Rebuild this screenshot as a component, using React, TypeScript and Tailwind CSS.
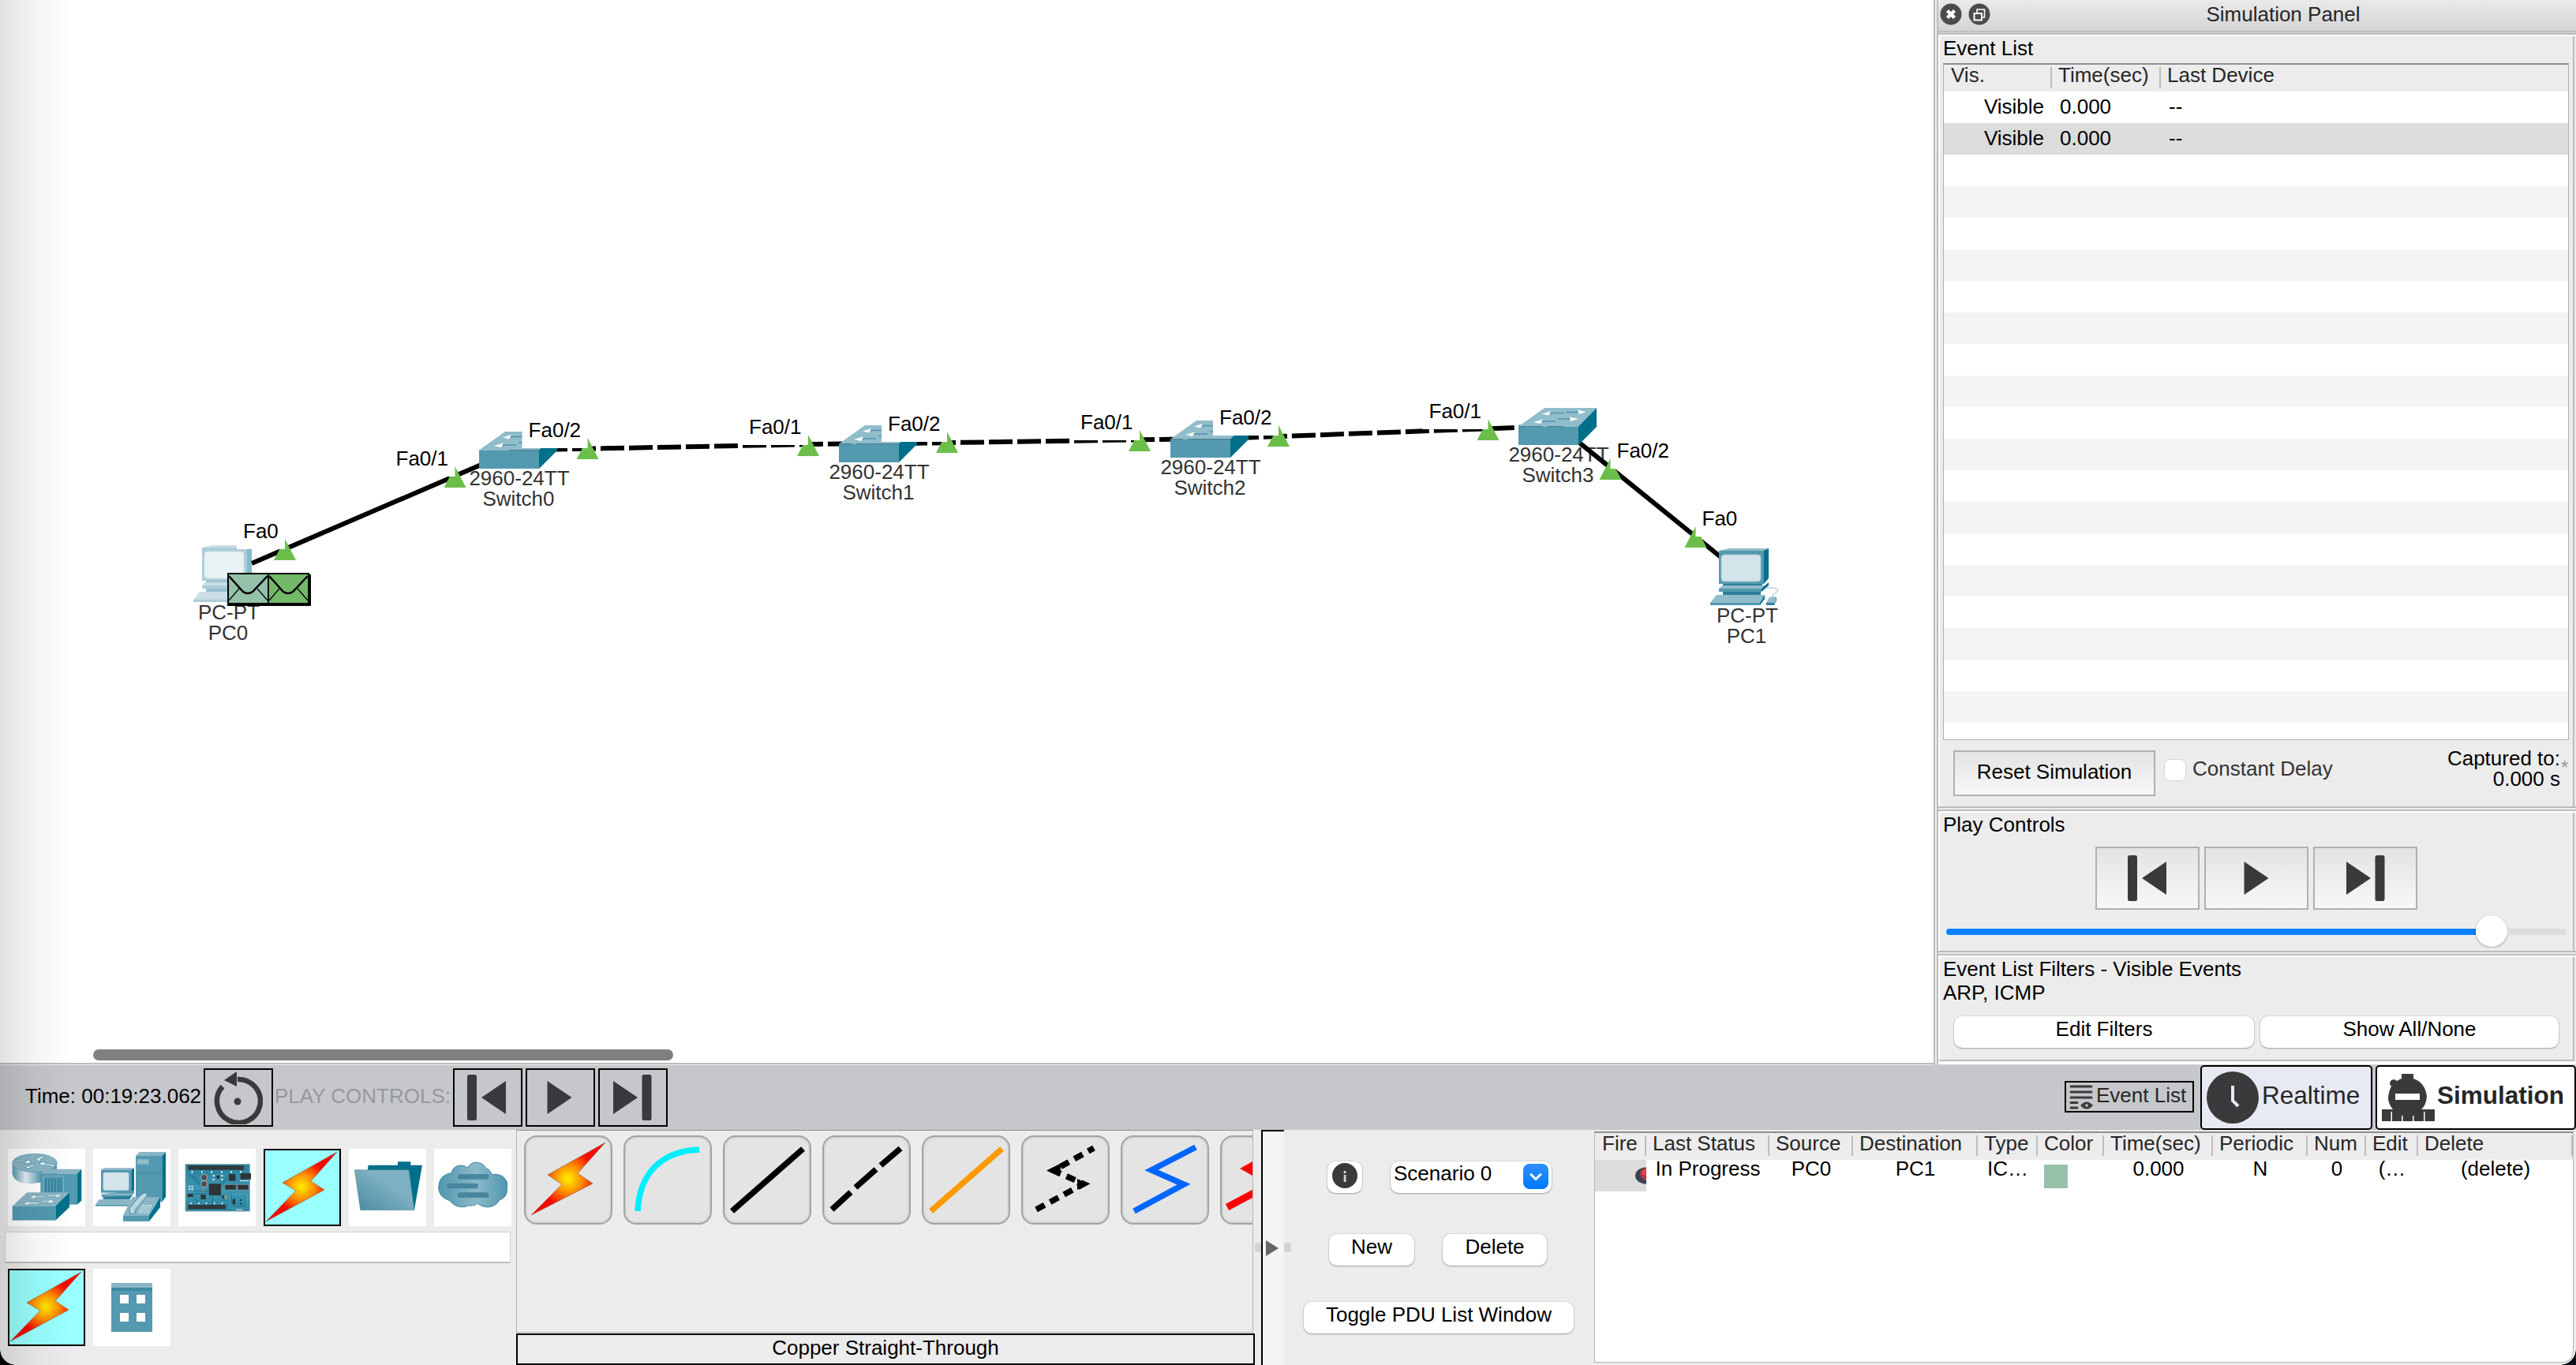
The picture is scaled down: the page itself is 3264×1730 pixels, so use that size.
import React from 'react';

const NAME_FILL = '#333333';

function Switch({ x, y }: { x: number; y: number }) {
  return (
    <g transform={`translate(${x} ${y})`}>
      <polygon points="33,0 99,0 76,23.5 0,23.5" fill="#91bccb" />
      <polygon points="99,0 99,24 76,47 76,23.5" fill="#00708a" />
      <rect x="0" y="23.5" width="76" height="23.5" fill="#5399b0" />
      <g stroke="#4f93aa" strokeWidth="1.6">
        <path d="M40 6.5H57M60 5.5H76M28 17H47M50 14H66" />
      </g>
      <g fill="#ffffff">
        <polygon points="30,7.5 41,4 38,9.5" />
        <polygon points="86,5 75,2.5 77,8" />
        <polygon points="19,18 31,14.5 28,20" />
        <polygon points="76,14 65,11.5 66,17" />
      </g>
    </g>
  );
}

function Pc({ x, y, opacity = 1 }: { x: number; y: number; opacity?: number }) {
  return (
    <g transform={`translate(${x} ${y})`} opacity={opacity}>
      <path d="M70 50C86 49 90 53 82 57C79 58 79 59 79 62" fill="none" stroke="#a9cad6" strokeWidth="1.2" />
      <polygon points="11,3 24,0 74,0 69,3" fill="#91bccb" />
      <polygon points="68,3 74,0 74,38 68,45" fill="#00708a" />
      <rect x="11" y="3" width="57" height="42" fill="#5399b0" />
      <rect x="14" y="8" width="50" height="34" rx="4" fill="#d3e4ea" stroke="#9cc3d0" strokeWidth="1" />
      <rect x="16" y="45" width="50" height="3" fill="#2b8099" />
      <polygon points="15,47 70,47 65,51 11,51" fill="#91bccb" />
      <rect x="11" y="51" width="54" height="4" fill="#5399b0" />
      <polygon points="65,51 74,43 74,47 65,55" fill="#00708a" />
      <rect x="16" y="55" width="48" height="4" fill="#2b8099" />
      <polygon points="8,59 69,59 63,69 0,69" fill="#91bccb" />
      <rect x="0" y="69" width="63" height="3" fill="#5399b0" />
      <polygon points="69,59 69,64 63,72 63,69" fill="#00708a" />
      <polygon points="75,62 84,61 82,69 71,69" fill="#91bccb" />
      <polygon points="71,69 82,69 84,61 84,66 81,72 71,72" fill="#2b8099" />
    </g>
  );
}

function Name({ x, y, lines }: { x: number; y: number; lines: [string, string] }) {
  return (
    <g fill={NAME_FILL} textAnchor="middle">
      <text x={x} y={y}>{lines[0]}</text>
      <text x={x - 1} y={y + 26}>{lines[1]}</text>
    </g>
  );
}

function Port({ x, y, label, side, width = 83 }: { x: number; y: number; label: string; side: 'l' | 'r'; width?: number }) {
  const rx = side === 'l' ? x - width : x;
  return (
    <g>
      <polygon points={`${x},${y - 27} ${x + 14},${y} ${x - 14},${y}`} fill="#6cbe4a" />
      <rect x={rx} y={y - 54} width={width} height="40" fill="#ffffff" />
      <text x={rx + 8} y={y - 28} fill="#000000">{label}</text>
    </g>
  );
}

function Envelope({ x, y, color }: { x: number; y: number; color: string }) {
  return (
    <g transform={`translate(${x} ${y})`} fill="none" stroke="#000000">
      <rect x="1" y="1" width="51" height="38" fill={color} strokeWidth="2" />
      <path d="M2 4L20 24Q26 28 32 24L51 4" strokeWidth="2.5" />
      <path d="M2 35L15 20M51 35L38 20" strokeWidth="1.2" />
    </g>
  );
}

function Workspace() {
  return (
    <svg className="block" width="2450" height="1347" viewBox="0 0 2450 1347" fontFamily='"Liberation Sans", Arial, sans-serif' fontSize="26">
      <Name x={658} y={615} lines={['2960-24TT', 'Switch0']} />
      <Name x={1114} y={607} lines={['2960-24TT', 'Switch1']} />
      <Name x={1534} y={601} lines={['2960-24TT', 'Switch2']} />
      <Name x={1975} y={585} lines={['2960-24TT', 'Switch3']} />
      <Name x={290} y={785} lines={['PC-PT', 'PC0']} />
      <Name x={2214} y={789} lines={['PC-PT', 'PC1']} />
      <g stroke="#000000" strokeWidth="6" fill="none">
        <path d="M319 714L656 569M1974 539L2210 730" />
        <path strokeDasharray="30 6" d="M653 570.5L1112 561.5" />
        <path strokeDasharray="30 6" d="M1109 562.5L1532 556" />
        <path strokeDasharray="30 6" d="M1529 556.5L1974 540" />
      </g>
      <Switch x={607} y={547} />
      <Switch x={1063} y={539} />
      <Switch x={1483} y={533} />
      <Switch x={1924} y={517} />
      <Pc x={2167} y={695} />
      <Pc x={245} y={691} opacity={0.48} />
      <Port x={361} y={710} label="Fa0" side="l" width={61} />
      <Port x={576.5} y={618} label="Fa0/1" side="l" />
      <Port x={744.6} y={582} label="Fa0/2" side="l" />
      <Port x={1024} y={578} label="Fa0/1" side="l" />
      <Port x={1200} y={574} label="Fa0/2" side="l" />
      <Port x={1444} y={572} label="Fa0/1" side="l" />
      <Port x={1620} y={566} label="Fa0/2" side="l" />
      <Port x={1885.5} y={558} label="Fa0/1" side="l" />
      <Port x={2040.5} y={608} label="Fa0/2" side="r" />
      <Port x={2148.5} y={694} label="Fa0" side="r" width={61} />
      <rect x="288" y="728" width="106" height="40" fill="#000000" />
      <Envelope x={288} y={726} color="#94c1a9" />
      <Envelope x={339} y={726} color="#74b86a" />
    </svg>
  );
}

type PlayKind = 'back' | 'play' | 'forward';

function PlayIcon({ kind, className }: { kind: PlayKind; className?: string }) {
  return (
    <svg className={className} width="56" height="60" viewBox="0 0 56 60" fill="#3a3a3c">
      {kind === 'back' && (
        <>
          <rect x="3" y="1" width="12" height="58" rx="2.5" />
          <polygon points="21,30 52,9 52,51" />
        </>
      )}
      {kind === 'play' && <polygon points="12.5,9 43.500,30 12.500,51" />}
      {kind === 'forward' && (
        <>
          <polygon points="4,9 35,30 4,51" />
          <rect x="40.5" y="1" width="12" height="58" rx="2.5" />
        </>
      )}
    </svg>
  );
}

function SectionGap() {
  return (
    <div className="h-[8px] border-t-2 border-[#bcbcbc] pt-[2px]">
      <div className="h-[4px] border-t-2 border-[#bcbcbc] bg-white" />
    </div>
  );
}

function MacButton({ children, className = '' }: { children: React.ReactNode; className?: string }) {
  return (
    <button className={`flex h-[40px] justify-center rounded-[10px] bg-white leading-[33px] shadow-[0_0_1px_1px_rgba(0,0,0,0.07),0_1px_2px_rgba(0,0,0,0.28)] ${className}`}>
      {children}
    </button>
  );
}

const events = Array.from({ length: 21 }, (_, i) => (i < 2 ? { vis: 'Visible', time: '0.000', last: '--' } : null));

function SimulationPanel() {
  return (
    <aside className="flex h-[1350px] w-[814px] shrink-0 border-l-2 border-[#bcbcbc] bg-[#ececec] pl-[2px]">
      <div className="flex flex-1 flex-col border-l-2 border-[#bcbcbc]">
        <div className="flex h-[39px] shrink-0 items-start bg-gradient-to-b from-[#eaeaea] to-[#d4d4d4] text-[#262626]">
          <div className="flex w-[66px] shrink-0 gap-[8px] pt-[4px] pl-[2px]">
            <svg width="28" height="28" viewBox="0 0 28 28">
              <circle cx="14" cy="14" r="13.5" fill="#4b4b4b" />
              <path d="M9.5 9.5L18.5 18.5M18.5 9.5L9.5 18.5" stroke="#fff" strokeWidth="4.5" />
            </svg>
            <svg width="28" height="28" viewBox="0 0 28 28">
              <circle cx="14" cy="14" r="13.5" fill="#4b4b4b" />
              <path d="M11 12V8H20.5V18H17" fill="none" stroke="#fff" strokeWidth="1.6" />
              <rect x="7.5" y="13" width="9.5" height="8.5" fill="none" stroke="#fff" strokeWidth="2" />
            </svg>
          </div>
          <div className="flex-1 text-center leading-[36px]">Simulation Panel</div>
        </div>
        <div className="flex h-[7px] shrink-0 flex-col border-t-2 border-[#bdbdbd] bg-[#d6d6d6] pt-[1px]">
          <div className="flex-1 border-t-2 border-[#bdbdbd] bg-white" />
        </div>

        <div className="mr-[2px] h-[976px] shrink-0 border-r-2 border-r-[#bcbcbc] border-l-2 border-l-white px-[4px]">
          <div className="h-[34px] leading-[30px]">Event List</div>
          <div className="mr-[1px] h-[858px] overflow-hidden border border-t-2 border-[#b0b0b0] border-t-[#8f8f8f] bg-white">
            <div className="flex h-[34px] bg-[#ececec] pt-[3px] leading-[20px] text-[#262626]">
              <div className="h-[27px] w-[137px] border-r-2 border-[#bdbdbd] pl-[9px]">Vis.</div>
              <div className="h-[27px] w-[138px] border-r-2 border-[#bdbdbd] pl-[8px]">Time(sec)</div>
              <div className="pl-[8px]">Last Device</div>
            </div>
            {events.map((e, i) => (
              <div key={i} className={`flex h-[40px] leading-[38px] ${i === 1 ? 'bg-[#dcdcdc]' : i % 2 ? 'bg-[#f3f5f4]' : 'bg-white'}`}>
                {e && (
                  <>
                    <div className="w-[127px] text-right">{e.vis}</div>
                    <div className="w-[138px] pl-[20px]">{e.time}</div>
                    <div className="pl-[20px]">{e.last}</div>
                  </>
                )}
              </div>
            ))}
          </div>
          <div className="flex h-[84px] items-start pl-[13px]">
            <button className="mt-[13px] h-[58px] w-[256px] border-2 border-[#b0b0b0] bg-gradient-to-b from-[#e3e3e3] to-[#f8f8f8] pb-[4px]">Reset Simulation</button>
            <div className="mt-[24px] ml-[11px] h-[28px] w-[28px] rounded-[7px] border border-[#d4d4d4] bg-white" />
            <div className="mt-[23px] ml-[8px] leading-[26px] text-[#333]">Constant Delay</div>
            <div className="mt-[10px] ml-auto text-right leading-[26px]">
              <div>Captured to:</div>
              <div>0.000 s</div>
            </div>
            <div className="mt-[22px] ml-px w-[11px] text-[24px] leading-[26px] text-[#9a9a9a]">*</div>
          </div>
        </div>
        <SectionGap />

        <div className="mr-[2px] h-[175px] shrink-0 border-r-2 border-r-[#bcbcbc] border-l-2 border-l-white px-[4px]">
          <div className="h-[43px] leading-[30px]">Play Controls</div>
          <div className="flex justify-center gap-[6px]">
            {(['back', 'play', 'forward'] as PlayKind[]).map((k) => (
              <button key={k} className="flex h-[80px] w-[132px] items-center justify-center border-2 border-[#b0b0b0] bg-gradient-to-b from-[#e3e3e3] to-[#f8f8f8]">
                <PlayIcon kind={k} />
              </button>
            ))}
          </div>
          <div className="mt-[8px] ml-[4px] flex h-[40px] w-[786px] items-center overflow-hidden">
            <div className="h-[8px] w-[671px] rounded-l-full bg-[#0a82ff]" />
            <div className="-mt-[2px] h-[40px] w-[40px] shrink-0 rounded-full bg-white shadow-[0_1px_3px_rgba(0,0,0,0.35)]" />
            <div className="h-[8px] flex-1 rounded-r-full bg-[#dcdcdc]" />
          </div>
        </div>
        <SectionGap />

        <div className="mr-[2px] flex h-[132px] shrink-0 flex-col border-r-2 border-b-2 border-r-[#bcbcbc] border-b-[#bcbcbc] border-l-2 border-l-white px-[4px]">
          <div className="leading-[31px]">Event List Filters - Visible Events</div>
          <div className="leading-[29px]">ARP, ICMP</div>
          <div className="mt-[15px] flex gap-[8px] pl-[14px]">
            <MacButton className="w-[380px]">Edit Filters</MacButton>
            <MacButton className="w-[378px]">Show All/None</MacButton>
          </div>
        </div>
        <div className="flex-1 border-b border-[#d0d0d0] bg-white" />
      </div>
    </aside>
  );
}

function Toolbar() {
  return (
    <div className="flex h-[82px] shrink-0 items-center bg-[#c6c7cb]">
      <div className="w-[258px] pb-[4px] pl-[32px] whitespace-nowrap">Time: 00:19:23.062</div>
      <button className="flex h-[74px] w-[88px] items-center justify-center border-2 border-black pr-[2px]">
        <svg width="64" height="68" viewBox="0 0 64 68">
          <path d="M13 20A27.5 27.5 0 1 0 32 11" fill="none" stroke="#3a3a3c" strokeWidth="6.5" />
          <polygon points="31,1 31,20 15,12" fill="#3a3a3c" />
          <circle cx="32" cy="39" r="4.5" fill="#3a3a3c" />
        </svg>
      </button>
      <div className="w-[228px] pb-[4px] pl-[2px] whitespace-nowrap text-[#98989b]">PLAY CONTROLS:</div>
      <div className="flex gap-[4px]">
        {(['back', 'play', 'forward'] as PlayKind[]).map((k) => (
          <button key={k} className="flex h-[74px] w-[88px] items-center justify-center border-2 border-black">
            <PlayIcon kind={k} className="-ml-[3px]" />
          </button>
        ))}
      </div>
      <button className="mt-[-2px] ml-auto flex h-[40px] w-[164px] items-center border-2 border-black pl-[3px] text-[#262626]">
        <svg width="34" height="34" viewBox="0 0 34 34" fill="none" stroke="#3a3a3c" strokeWidth="3" strokeLinecap="round">
          <path d="M3 4H29M3 11H29M3 18H29M3 24.5H11M3 31H11" />
          <path d="M15 28Q23 19 31 28Q23 37 15 28Z" fill="#3a3a3c" stroke="none" />
          <circle cx="23" cy="28" r="1.8" fill="#c6c7cb" stroke="none" />
        </svg>
        <span className="pb-[4px] pl-px whitespace-nowrap">Event List</span>
      </button>
      <button className="ml-[8px] flex h-[82px] w-[218px] items-center rounded-[5px] border-2 border-black bg-[#e7eaf3] pl-[6px] text-[31.5px] text-[#262626]">
        <svg width="66" height="66" viewBox="0 0 66 66">
          <circle cx="33" cy="33" r="33" fill="#3a3a3c" />
          <path d="M33 18V37L40 44" fill="none" stroke="#e7eaf3" strokeWidth="4" />
        </svg>
        <span className="pb-[5px] pl-[4px]">Realtime</span>
      </button>
      <button className="ml-[4px] flex h-[82px] w-[254px] items-center rounded-[5px] border-2 border-black bg-white pl-[5px] text-[31.5px] font-bold text-[#262626]">
        <svg width="68" height="62" viewBox="0 0 68 62" fill="#3a3a3c">
          <path d="M26 1H41V7Q56 12 58 30Q57 41 51 46H68V61H1V46H15Q9 39 9 31Q10 22 13 17L11 14Q11 8 17 8L20 10Q23 8 26 7Z" />
          <rect x="18" y="26" width="31" height="8" fill="#ffffff" />
          <g fill="#ffffff">
            <rect x="12.5" y="49" width="1.5" height="12" />
            <rect x="26" y="54" width="1.5" height="7" />
            <rect x="40" y="54" width="1.5" height="7" />
            <rect x="54" y="49" width="1.5" height="12" />
          </g>
        </svg>
        <span className="pb-[5px] pl-[3px]">Simulation</span>
      </button>
    </div>
  );
}

function Bolt({ className, points }: { className?: string; points: string }) {
  return (
    <svg className={className} viewBox="0 0 98 98">
      <defs>
        <radialGradient id="bolt" gradientUnits="userSpaceOnUse" cx="48" cy="48" r="34">
          <stop offset="0" stopColor="#fff200" />
          <stop offset="0.5" stopColor="#ff8a00" />
          <stop offset="1" stopColor="#f80800" />
        </radialGradient>
      </defs>
      <polygon points={points} fill="url(#bolt)" stroke="#8a5a4a" strokeWidth="0.6" />
    </svg>
  );
}

const BOLT_POINTS = '93,4 24,43 41,53 3,92 77,52 60,41';

function NetworkDevices() {
  return (
    <svg className="h-[98px] w-[98px]" viewBox="0 0 294 294">
      <defs>
        <linearGradient id="cyl" x1="0" x2="1" y1="0" y2="0">
          <stop offset="0" stopColor="#5399b0" />
          <stop offset="0.3" stopColor="#e8f1f4" />
          <stop offset="0.65" stopColor="#5399b0" />
        </linearGradient>
      </defs>
      <path d="M17 58V96Q25 132 85 133Q145 132 186 96V58Z" fill="url(#cyl)" />
      <ellipse cx="102" cy="54" rx="85" ry="35" fill="#8ab5c5" stroke="#5399b0" strokeWidth="2" />
      <g fill="#ffffff" stroke="#2f7f97" strokeWidth="2">
        <path d="M30 40L72 48L76 41L90 52L66 58L68 52L30 45Z" />
        <path d="M106 44L114 35L134 26L138 31L122 40L124 47Z" />
        <path d="M180 62L140 55L142 49L118 54L134 66L136 60L176 68Z" />
        <path d="M98 56L96 68L84 70L86 76L66 72L76 64L80 68Z" />
      </g>
      <polygon points="124,95 140,77 280,77 263,95" fill="#8ab5c5" />
      <rect x="124" y="95" width="139" height="117" fill="#5399b0" />
      <polygon points="263,95 280,77 280,197 263,212" fill="#00708a" />
      <rect x="134" y="104" width="77" height="75" fill="#5399b0" stroke="#8ab5c5" strokeWidth="3" />
      <path d="M144 113V168M156 113V168M168 113V168M180 113V168M192 113V168M202 113V168" stroke="#2b7f97" strokeWidth="4" />
      <polygon points="73,166 234,166 181,218 17,218" fill="#8ab5c5" />
      <polygon points="234,166 234,222 181,272 181,218" fill="#00708a" />
      <rect x="17" y="218" width="164" height="54" fill="#5399b0" />
      <g fill="#ffffff" stroke="#5b9db3" strokeWidth="1.5">
        <path d="M84 184L108 174L104 180H140V184H104L102 190Z" />
        <path d="M206 178L182 172L186 176H150V180H184L178 186Z" />
        <path d="M58 208L84 200L80 204H118V209H80L78 214Z" />
        <path d="M180 200L156 192L158 197H126V201H156L152 208Z" />
      </g>
    </svg>
  );
}

function EndDevices() {
  return (
    <svg className="h-[98px] w-[98px]" viewBox="0 0 294 294">
      <polygon points="162,27 176,12 276,12 262,27" fill="#8ab5c5" />
      <rect x="162" y="27" width="100" height="175" fill="#5399b0" />
      <polygon points="262,27 276,12 276,183 262,202" fill="#00708a" />
      <path d="M162 94H262" stroke="#3d879f" strokeWidth="2" />
      <rect x="167" y="39" width="45" height="21" fill="#8ab5c5" />
      <path d="M172 48H206" stroke="#d3e4ea" strokeWidth="2" />
      <polygon points="30,80 42,73 156,73 146,80" fill="#8ab5c5" />
      <rect x="30" y="80" width="115" height="87" fill="#5399b0" />
      <polygon points="145,80 156,74 156,157 145,167" fill="#00708a" />
      <rect x="38" y="90" width="98" height="68" rx="8" fill="#d3e4ea" />
      <polygon points="34,172 156,160 156,168 140,184 32,184" fill="#5399b0" />
      <polygon points="34,170 148,170 140,177 30,177" fill="#8ab5c5" />
      <polygon points="38,184 150,178 138,193 38,193" fill="#2b7f97" />
      <polygon points="22,193 148,193 134,212 9,212" fill="#8ab5c5" />
      <polygon points="9,212 134,212 150,195 150,202 136,218 9,218" fill="#5399b0" />
      <polygon points="150,183 255,184 213,253 114,253" fill="#8ab5c5" />
      <polygon points="255,184 255,222 213,276 213,253" fill="#00708a" />
      <rect x="114" y="253" width="99" height="23" fill="#5399b0" />
      <path d="M192 168H205V178L162 230L158 246L140 248L138 226L178 178Z" fill="#b9d6e0" stroke="#3d879f" strokeWidth="3" />
      <path d="M188 214H224L208 244H172Z" fill="#d9e9ee" />
      <path d="M184 221H220M180 229H216M176 237H212M197 214L182 244M206 214L191 244M215 214L200 244" stroke="#6ba6ba" strokeWidth="2.5" />
    </svg>
  );
}

function Board() {
  return (
    <svg className="h-[98px] w-[98px]" viewBox="0 0 294 294">
      <defs>
        <linearGradient id="pcb" x1="0" x2="0" y1="0" y2="1">
          <stop offset="0" stopColor="#257f9b" />
          <stop offset="0.55" stopColor="#3e97b3" />
          <stop offset="1" stopColor="#2782a0" />
        </linearGradient>
      </defs>
      <rect x="27" y="59" width="244" height="178" fill="url(#pcb)" stroke="#86a5b0" strokeWidth="3" />
      <g stroke="#14617b" strokeWidth="2.5" fill="none">
        <path d="M44 100L86 142M52 100L90 136M190 105L150 138M185 115L160 145M60 160H115M60 170H110M60 190L80 205M160 180L178 200M200 170V205M105 195V212M130 180V212" />
      </g>
      <g fill="#2d3438">
        <rect x="37" y="64" width="212" height="16" />
        <rect x="37" y="213" width="143" height="16" />
        <rect x="236" y="93" width="40" height="23" />
        <rect x="192" y="96" width="25" height="26" />
        <rect x="116" y="133" width="46" height="44" />
        <rect x="85" y="174" width="19" height="18" />
        <rect x="35" y="171" width="21" height="12" />
        <rect x="177" y="136" width="43" height="20" stroke="#8a9195" strokeWidth="2" />
        <rect x="225" y="136" width="42" height="20" stroke="#8a9195" strokeWidth="2" />
        <rect x="206" y="191" width="10" height="20" />
        <rect x="167" y="177" width="7" height="10" />
      </g>
      <path d="M42 72H246M42 221H178" stroke="#434c54" strokeWidth="4" strokeDasharray="4 6" />
      <circle cx="98" cy="109" r="12" fill="#4c4c4c" stroke="#d9dcdd" strokeWidth="2" />
      <circle cx="98" cy="134" r="12" fill="#4c4c4c" stroke="#d9dcdd" strokeWidth="2" />
      <rect x="196" y="174" width="66" height="52" fill="none" stroke="#7cc0d4" strokeWidth="2" strokeDasharray="6 3" />
      <g fill="#e6eef1">
        <path d="M50 84h5v8h-5zM87 84h5v8h-5zM124 84h5v8h-5zM162 84h5v8h-5zM198 84h5v8h-5zM235 84h5v8h-5zM45 203h5v8h-5zM75 203h5v8h-5zM104 203h5v8h-5zM134 203h5v8h-5zM164 203h5v8h-5z" />
        <path d="M130 100h8v5h-8zM130 114h8v5h-8zM162 100h8v5h-8zM162 114h8v5h-8zM40 140h6v6h-6zM50 140h6v6h-6zM40 150h6v6h-6zM50 150h6v6h-6zM234 120h32v3h-32zM218 230h26v3h-26z" />
      </g>
      <rect x="146" y="102" width="9" height="11" fill="#222" />
      <path d="M178 176h6v16h-6zM92 154h5v8h-5z" fill="#d98a4a" />
      <path d="M234 192h6v6h-6zM234 206h6v6h-6z" fill="#14405a" />
    </svg>
  );
}

function Folder() {
  return (
    <svg className="h-[98px] w-[98px]" viewBox="0 0 294 294">
      <defs>
        <linearGradient id="fold" x1="0" x2="1" y1="1" y2="0">
          <stop offset="0" stopColor="#4a8aa0" />
          <stop offset="0.6" stopColor="#7db0c2" />
          <stop offset="1" stopColor="#7db0c2" />
        </linearGradient>
      </defs>
      <polygon points="74,62 186,62 186,49 235,49 235,62 279,62 249,232 70,90" fill="#00708a" />
      <polygon points="22,80 228,80 249,233 44,233" fill="url(#fold)" stroke="#5b7f8b" strokeWidth="1.5" />
    </svg>
  );
}

function Cloud() {
  return (
    <svg className="h-[98px] w-[98px]" viewBox="0 0 294 294">
      <defs>
        <linearGradient id="cloud" x1="0" x2="1" y1="0" y2="0">
          <stop offset="0" stopColor="#4f97b0" />
          <stop offset="0.55" stopColor="#8cb9c9" />
          <stop offset="1" stopColor="#4f97b0" />
        </linearGradient>
      </defs>
      <path
        d="M66 92Q72 66 98 63Q117 62 127 72Q142 48 166 52Q188 55 197 74Q215 80 219 98Q252 93 268 112Q282 127 277 150Q280 186 248 195Q238 218 205 222Q182 222 163 207Q154 220 146 214Q138 220 130 215Q122 222 110 221Q78 222 60 197Q17 184 17 146Q19 98 66 92Z"
        fill="url(#cloud)"
        stroke="#3f879f"
        strokeWidth="3"
      />
      <g fill="#47869d">
        <rect x="90" y="96" width="118" height="20" rx="8" />
        <rect x="49" y="131" width="118" height="20" rx="8" />
        <rect x="90" y="166" width="118" height="20" rx="8" />
      </g>
    </svg>
  );
}

function Tile({ children, active }: { children: React.ReactNode; active?: boolean }) {
  return (
    <div className={`flex h-[98px] w-[98px] shrink-0 items-center justify-center overflow-hidden ${active ? 'border-2 border-black bg-[#99ffff]' : 'bg-white'}`}>
      {children}
    </div>
  );
}

function DevicePicker() {
  return (
    <div className="w-[654px] shrink-0 pt-[24px]">
      <div className="flex gap-[10px] pl-[10px]">
        <Tile><NetworkDevices /></Tile>
        <Tile><EndDevices /></Tile>
        <Tile><Board /></Tile>
        <Tile active><Bolt className="h-[98px] w-[98px] shrink-0" points={BOLT_POINTS} /></Tile>
        <Tile><Folder /></Tile>
        <Tile><Cloud /></Tile>
      </div>
      <div className="mt-[7px] ml-[6px] h-[40px] w-[641px] border border-b-2 border-[#d5d5d5] border-b-[#bdbdbd] bg-white" />
      <div className="mt-[7px] flex gap-[10px] pl-[10px]">
        <Tile active><Bolt className="h-[98px] w-[98px] shrink-0" points={BOLT_POINTS} /></Tile>
        <Tile>
          <svg width="52" height="62" viewBox="0 0 52 62">
            <rect width="52" height="62" fill="#5399b0" />
            <rect width="52" height="6" fill="#8ab5c5" />
            <rect y="6" width="52" height="4" fill="#3d89a2" />
            <path d="M11 15h11v11h-11zM32 15h11v11h-11zM11 38h11v11h-11zM32 38h11v11h-11z" fill="#fff" />
          </svg>
        </Tile>
      </div>
    </div>
  );
}

function Wire({ children }: { children: React.ReactNode }) {
  return (
    <button className="h-[113px] w-[112px] shrink-0 rounded-[16px] border-2 border-[#a4a4a4] bg-[#e4e4e4] shadow-[inset_0_0_2px_1px_rgba(0,0,0,0.12)]">
      <svg className="-mt-[2px] -ml-[2px] block" width="112" height="113" viewBox="0 0 112 113" fill="none" strokeWidth="7.5">
        {children}
      </svg>
    </button>
  );
}

function WirePicker() {
  return (
    <div className="w-[936px] shrink-0">
      <div className="mr-[2px] h-[257px] overflow-hidden border border-[#b5b5b5] border-t-[#8f8f8f] pt-[6px] pl-[9px]">
        <div className="flex gap-[14px]">
          <Wire>
            <polygon points="103,9 30,50 48,62 9,101 87,61 68,48" fill="url(#wirebolt)" stroke="#8a5a4a" strokeWidth="0.6" />
            <defs>
              <radialGradient id="wirebolt" gradientUnits="userSpaceOnUse" cx="56" cy="55" r="36">
                <stop offset="0" stopColor="#fff200" />
                <stop offset="0.5" stopColor="#ff8a00" />
                <stop offset="1" stopColor="#f80800" />
              </radialGradient>
            </defs>
          </Wire>
          <Wire><path d="M18 96C20 50 46 20 96 18" stroke="#00eeff" /></Wire>
          <Wire><path d="M11.5 96L101.5 17" stroke="#000" /></Wire>
          <Wire><path d="M12 94L36 72M42 66L68 43M74 38L99 16.5" stroke="#000" /></Wire>
          <Wire><path d="M11.5 96L101.5 17" stroke="#ff9900" /></Wire>
          <Wire>
            <path d="M19 94L79 61.5L41 44.5L92 16" stroke="#000" strokeDasharray="12 8" />
            <path d="M51 35L32 44.5L48 52ZM71 55L85 61.5L71 69Z" fill="#000" />
          </Wire>
          <Wire><path d="M17 96L80 62L39 44L95 15" stroke="#0066ff" /></Wire>
          <Wire><path d="M9 91L80 53" stroke="#ff0000" strokeWidth="9" /><path d="M25 42L50 28V56Z" fill="#ff0000" /></Wire>
        </div>
      </div>
      <div className="mt-[1px] h-[40px] border-2 border-black text-center leading-[33px]">Copper Straight-Through</div>
    </div>
  );
}

function Splitter() {
  return (
    <div className="flex w-[46px] shrink-0 items-center">
      <div className="h-[12px] w-[8px] rounded-[3px] bg-[#d3d3d3]" />
      <div className="flex h-full w-[29px] items-center border-t-2 border-l-2 border-black bg-[#f4f4f4] pl-[4px]">
        <svg width="16" height="20" viewBox="0 0 16 20">
          <polygon points="0,0 16,10 0,20" fill="#666" />
        </svg>
      </div>
      <div className="h-[12px] w-[9px] rounded-[3px] bg-[#d3d3d3]" />
    </div>
  );
}

function ScenarioControls() {
  return (
    <div className="w-[384px] shrink-0 pt-[40px]">
      <div className="flex pl-[46px]">
        <MacButton className="w-[44px] items-start pt-[2px]">
          <svg width="32" height="32" viewBox="0 0 32 32">
            <circle cx="16" cy="16" r="16" fill="#3a3a3c" />
            <rect x="14.7" y="10" width="2.8" height="3" fill="#d5d5d5" />
            <rect x="14.7" y="15" width="2.8" height="9" fill="#d5d5d5" />
          </svg>
        </MacButton>
        <div className="ml-[36px] flex h-[40px] w-[204px] justify-between rounded-[10px] bg-white pr-[4px] pl-[4px] leading-[31px] shadow-[0_0_1px_1px_rgba(0,0,0,0.07),0_1px_2px_rgba(0,0,0,0.28)]">
          <span>Scenario 0</span>
          <svg className="mt-[3px]" width="32" height="32" viewBox="0 0 32 32">
            <defs>
              <linearGradient id="drop" x1="0" x2="0" y1="0" y2="1">
                <stop offset="0" stopColor="#2c90ff" />
                <stop offset="1" stopColor="#007aff" />
              </linearGradient>
            </defs>
            <rect width="32" height="32" rx="8" fill="url(#drop)" />
            <path d="M10 13.5L16 19.5L22 13.5" fill="none" stroke="#fff" strokeWidth="3" strokeLinecap="round" strokeLinejoin="round" />
          </svg>
        </div>
      </div>
      <div className="mt-[52px] flex gap-[36px] pl-[48px]">
        <MacButton className="w-[108px]">New</MacButton>
        <MacButton className="w-[132px]">Delete</MacButton>
      </div>
      <div className="mt-[46px] pl-[16px]">
        <MacButton className="w-[342px]">Toggle PDU List Window</MacButton>
      </div>
    </div>
  );
}

function PduTable() {
  const cols = 'grid grid-cols-[65px_156px_106px_158px_76px_84px_138px_120px_74px_66px_1fr]';
  const heads = ['Fire', 'Last Status', 'Source', 'Destination', 'Type', 'Color', 'Time(sec)', 'Periodic', 'Num', 'Edit', 'Delete'];
  const cells = ['In Progress', 'PC0', 'PC1', 'IC…', null, '0.000', 'N', '0', '(…', '(delete)'];
  return (
    <div className="mt-[2px] mb-[3px] w-[1241px] overflow-hidden rounded-br-[14px] border border-t-2 border-[#b5b5b5] border-t-[#8f8f8f] bg-white">
      <div className={`${cols} h-[34px] bg-[#ececec] pt-[3px] leading-[20px] whitespace-nowrap text-[#262626]`}>
        {heads.map((h, i) => (
          <div key={h} className={`h-[26px] border-r-2 border-[#bdbdbd] ${i === 0 ? 'pl-[9px]' : 'pl-[8px]'}`}>{h}</div>
        ))}
      </div>
      <div className={`${cols} h-[40px] text-center leading-[22px] whitespace-nowrap`}>
        <div className="flex items-center justify-end overflow-hidden bg-[#dcdcdc]">
          <svg width="14" height="22" viewBox="0 0 14 22">
            <ellipse cx="14" cy="11" rx="14" ry="10.5" fill="#3a4350" />
            <path d="M14 1Q6 3 6 9Q8 16 14 17Z" fill="#b53545" />
            <path d="M14 2Q8 4 8 10H14Z" fill="#e8404c" />
          </svg>
        </div>
        {cells.map((c, i) =>
          c === null ? (
            <div key={i} className="pt-[6px] pl-[8px]">
              <div className="h-[30px] w-[30px] bg-[#96c2ab]" />
            </div>
          ) : (
            <div key={i}>{c}</div>
          ),
        )}
      </div>
    </div>
  );
}

function CornerMask({ className }: { className: string }) {
  return <div className={`pointer-events-none absolute bottom-0 h-[20px] w-[20px] ${className}`} />;
}

export default function App() {
  return (
    <div className="relative flex h-[1730px] w-[3264px] flex-col overflow-hidden bg-[#ececec] font-['Liberation_Sans',Arial,sans-serif] text-[26px] text-black">
      <div className="flex h-[1350px] shrink-0">
        <main className="relative h-[1349px] w-[2450px] border-b-2 border-[#bcbcbc] bg-white">
          <Workspace />
          <div className="absolute bottom-[3px] left-[118px] h-[14px] w-[735px] rounded-full bg-[#808080]" />
        </main>
        <SimulationPanel />
      </div>
      <Toolbar />
      <div className="flex h-[298px]">
        <DevicePicker />
        <WirePicker />
        <Splitter />
        <ScenarioControls />
        <PduTable />
      </div>
      <div className="pointer-events-none absolute inset-y-0 left-0 w-[90px] bg-gradient-to-r from-black/12 via-black/4 to-transparent" />
      <CornerMask className="left-0 bg-[radial-gradient(circle_at_100%_0%,transparent_19.5px,#000_20px)]" />
      <CornerMask className="right-0 bg-[radial-gradient(circle_at_0%_0%,transparent_19.5px,#0a0e18_20px)]" />
    </div>
  );
}
